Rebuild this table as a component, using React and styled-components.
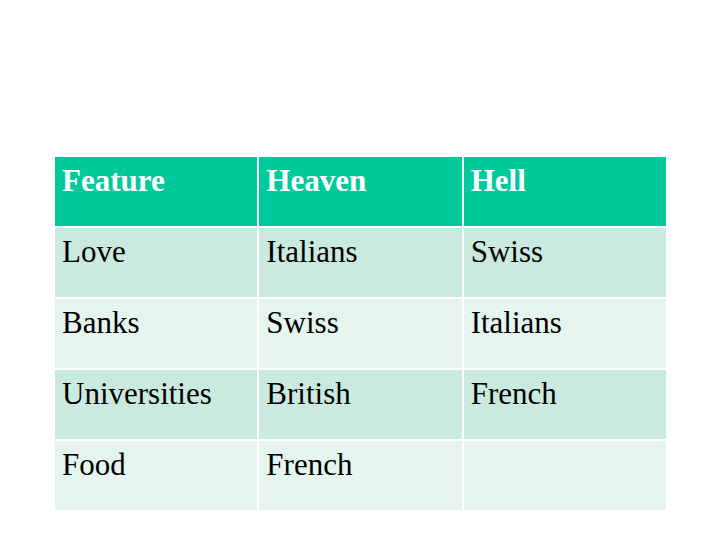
import React from "react";
import styled, { createGlobalStyle } from "styled-components";

const Global = createGlobalStyle`
  html, body { margin: 0; padding: 0; background: #ffffff; }
  body { font-family: "Liberation Serif", "Times New Roman", serif; }
`;

const Page = styled.div`
  width: 720px;
  height: 540px;
  box-sizing: border-box;
  padding: 157px 0 0 55px;
`;

const Table = styled.div`
  width: 611px;
  display: grid;
  grid-template-columns: repeat(3, 1fr);
  grid-auto-rows: 69px;
  gap: 2px;
  background: #ffffff;
`;

const Cell = styled.div`
  box-sizing: border-box;
  padding: 6px 7px;
  font-size: 31px;
  line-height: normal;
  background: ${(p) => (p.$head ? "#00c99a" : p.$odd ? "#cbeadf" : "#e6f4ee")};
  color: ${(p) => (p.$head ? "#ffffff" : "#000000")};
  font-weight: ${(p) => (p.$head ? 700 : 400)};
  white-space: nowrap;
`;

const header = ["Feature", "Heaven", "Hell"];
const rows = [
  ["Love", "Italians", "Swiss"],
  ["Banks", "Swiss", "Italians"],
  ["Universities", "British", "French"],
  ["Food", "French", ""],
];

export default function App() {
  return (
    <>
      <Global />
      <Page>
        <Table>
          {header.map((h) => (
            <Cell key={h} $head>
              {h}
            </Cell>
          ))}
          {rows.map((r, i) =>
            r.map((c, j) => (
              <Cell key={`${i}-${j}`} $odd={i % 2 === 0}>
                {c}
              </Cell>
            ))
          )}
        </Table>
      </Page>
    </>
  );
}
